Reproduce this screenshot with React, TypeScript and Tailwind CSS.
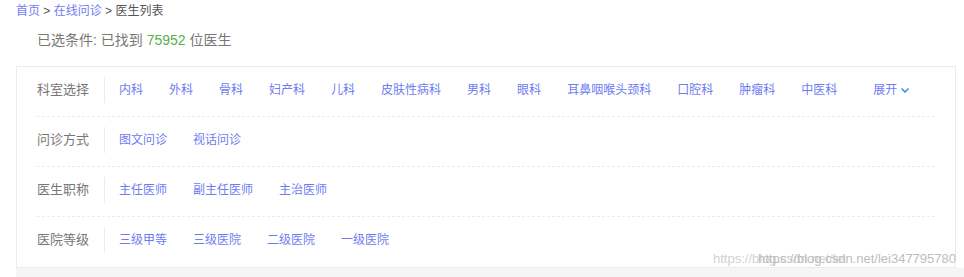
const FONT = "font-['Liberation_Sans','Noto_Sans_CJK_SC',sans-serif]";

const FILTERS: { label: string; items: string[]; more?: boolean }[] = [
  {
    label: "科室选择",
    items: ["内科", "外科", "骨科", "妇产科", "儿科", "皮肤性病科", "男科", "眼科", "耳鼻咽喉头颈科", "口腔科", "肿瘤科", "中医科"],
    more: true,
  },
  { label: "问诊方式", items: ["图文问诊", "视话问诊"] },
  { label: "医生职称", items: ["主任医师", "副主任医师", "主治医师"] },
  { label: "医院等级", items: ["三级甲等", "三级医院", "二级医院", "一级医院"] },
];

export default function App() {
  return (
    <div className={`${FONT} w-[964px] h-[277px] overflow-hidden bg-white relative`}>
      <div className="pl-4 pt-[3px] h-[17px] text-[12px] leading-[17px] text-[#555]">
        <span className="text-[#6f7cf0]">首页</span> &gt; <span className="text-[#6f7cf0]">在线问诊</span> &gt; 医生列表
      </div>
      <div className="pl-[37px] pt-[13px] h-[49px] text-[14px] leading-[20px] text-[#777]">
        已选条件: 已找到 <span className="text-[#56b04a]">75952</span> 位医生
      </div>
      <div className="ml-4 w-[940px] border border-[#ebebeb] px-5">
        {FILTERS.map((f, i) => (
          <div
            key={f.label}
            className={`flex items-center h-[50px] pb-1 ${i < FILTERS.length - 1 ? "border-b border-dashed border-[#ececec]" : ""}`}
          >
            <div className="w-[68px] text-[13px] text-[#777] border-r border-[#ececec] h-[26px] leading-[26px]">{f.label}</div>
            <div className="flex items-center pl-[14px] text-[12px] text-[#6f7cf0]">
              {f.items.map((it) => (
                <span key={it} className="mr-[26px]">{it}</span>
              ))}
              {f.more && (
                <span className="ml-[10px] flex items-center gap-[3px]">
                  展开
                  <svg width="10" height="10" viewBox="0 0 10 10" fill="none" stroke="#3b7cf4" strokeWidth="1.4">
                    <path d="M1.5 3.5 5 7l3.5-3.5" />
                  </svg>
                </span>
              )}
            </div>
          </div>
        ))}
      </div>
      <div className="ml-4 h-[12px] bg-[#f5f5f5]" />
      <div className="absolute left-[713px] top-[251px] text-[13px] leading-[15px] text-[#d2d2d2]">
        https://blog.csdn.net/lei
      </div>
      <div className="absolute right-[8px] top-[251px] text-[13px] leading-[15px] text-[#bdbdbd]">
        https://blog.csdn.net/lei347795780
      </div>
    </div>
  );
}
